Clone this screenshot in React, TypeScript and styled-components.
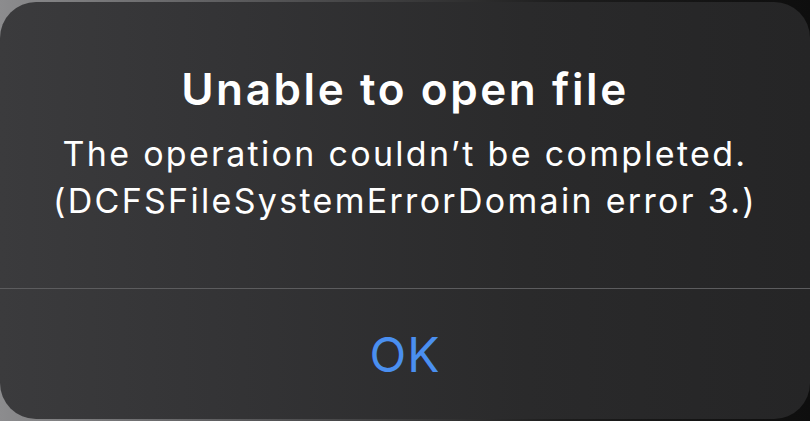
import React from "react";
import styled, { createGlobalStyle } from "styled-components";

const Global = createGlobalStyle`
  html, body {
    margin: 0;
    padding: 0;
    width: 810px;
    height: 421px;
    overflow: hidden;
    background: linear-gradient(90deg, #8c8c8e 0%, #5a5a5c 30%, #1c1c1c 70%, #0e0e0e 100%);
  }
  #root { width: 810px; height: 421px; }
`;

const Stage = styled.div`
  width: 810px;
  height: 421px;
  padding-top: 2px;
  box-sizing: border-box;
  display: flex;
  justify-content: center;
`;

const Alert = styled.div`
  width: 810px;
  height: 417px;
  border-radius: 36px;
  background: linear-gradient(90deg, #3b3b3d 0%, #333335 30%, #2a2a2b 65%, #252526 100%);
  display: flex;
  flex-direction: column;
  overflow: hidden;
  font-family: Inter, "Noto Sans", "Liberation Sans", sans-serif;
`;

const Content = styled.div`
  height: 286px;
  display: flex;
  flex-direction: column;
  align-items: center;
  box-sizing: border-box;
  padding-top: 59px;
  text-align: center;
  color: #ffffff;
`;

const Title = styled.div`
  font-size: 44px;
  font-weight: 600;
  line-height: 56px;
  letter-spacing: 2.6px;
  white-space: nowrap;
`;

const Message = styled.div`
  font-size: 34px;
  font-weight: 400;
  line-height: 47px;
  letter-spacing: 2.3px;
  margin-top: 13px;
  white-space: nowrap;
`;

const Divider = styled.div`
  height: 1px;
  background: #5c5c5e;
`;

const Button = styled.div`
  flex: 1;
  display: flex;
  align-items: flex-start;
  justify-content: center;
  padding-top: 37px;
  color: #4a8ff0;
  font-size: 48px;
  line-height: 58px;
  font-weight: 400;
  letter-spacing: 1px;
`;

export default function App() {
  return (
    <>
      <Global />
      <Stage>
        <Alert>
          <Content>
            <Title>Unable to open file</Title>
            <Message>
              The operation couldn’t be completed.
              <br />
              (DCFSFileSystemErrorDomain error 3.)
            </Message>
          </Content>
          <Divider />
          <Button>OK</Button>
        </Alert>
      </Stage>
    </>
  );
}
